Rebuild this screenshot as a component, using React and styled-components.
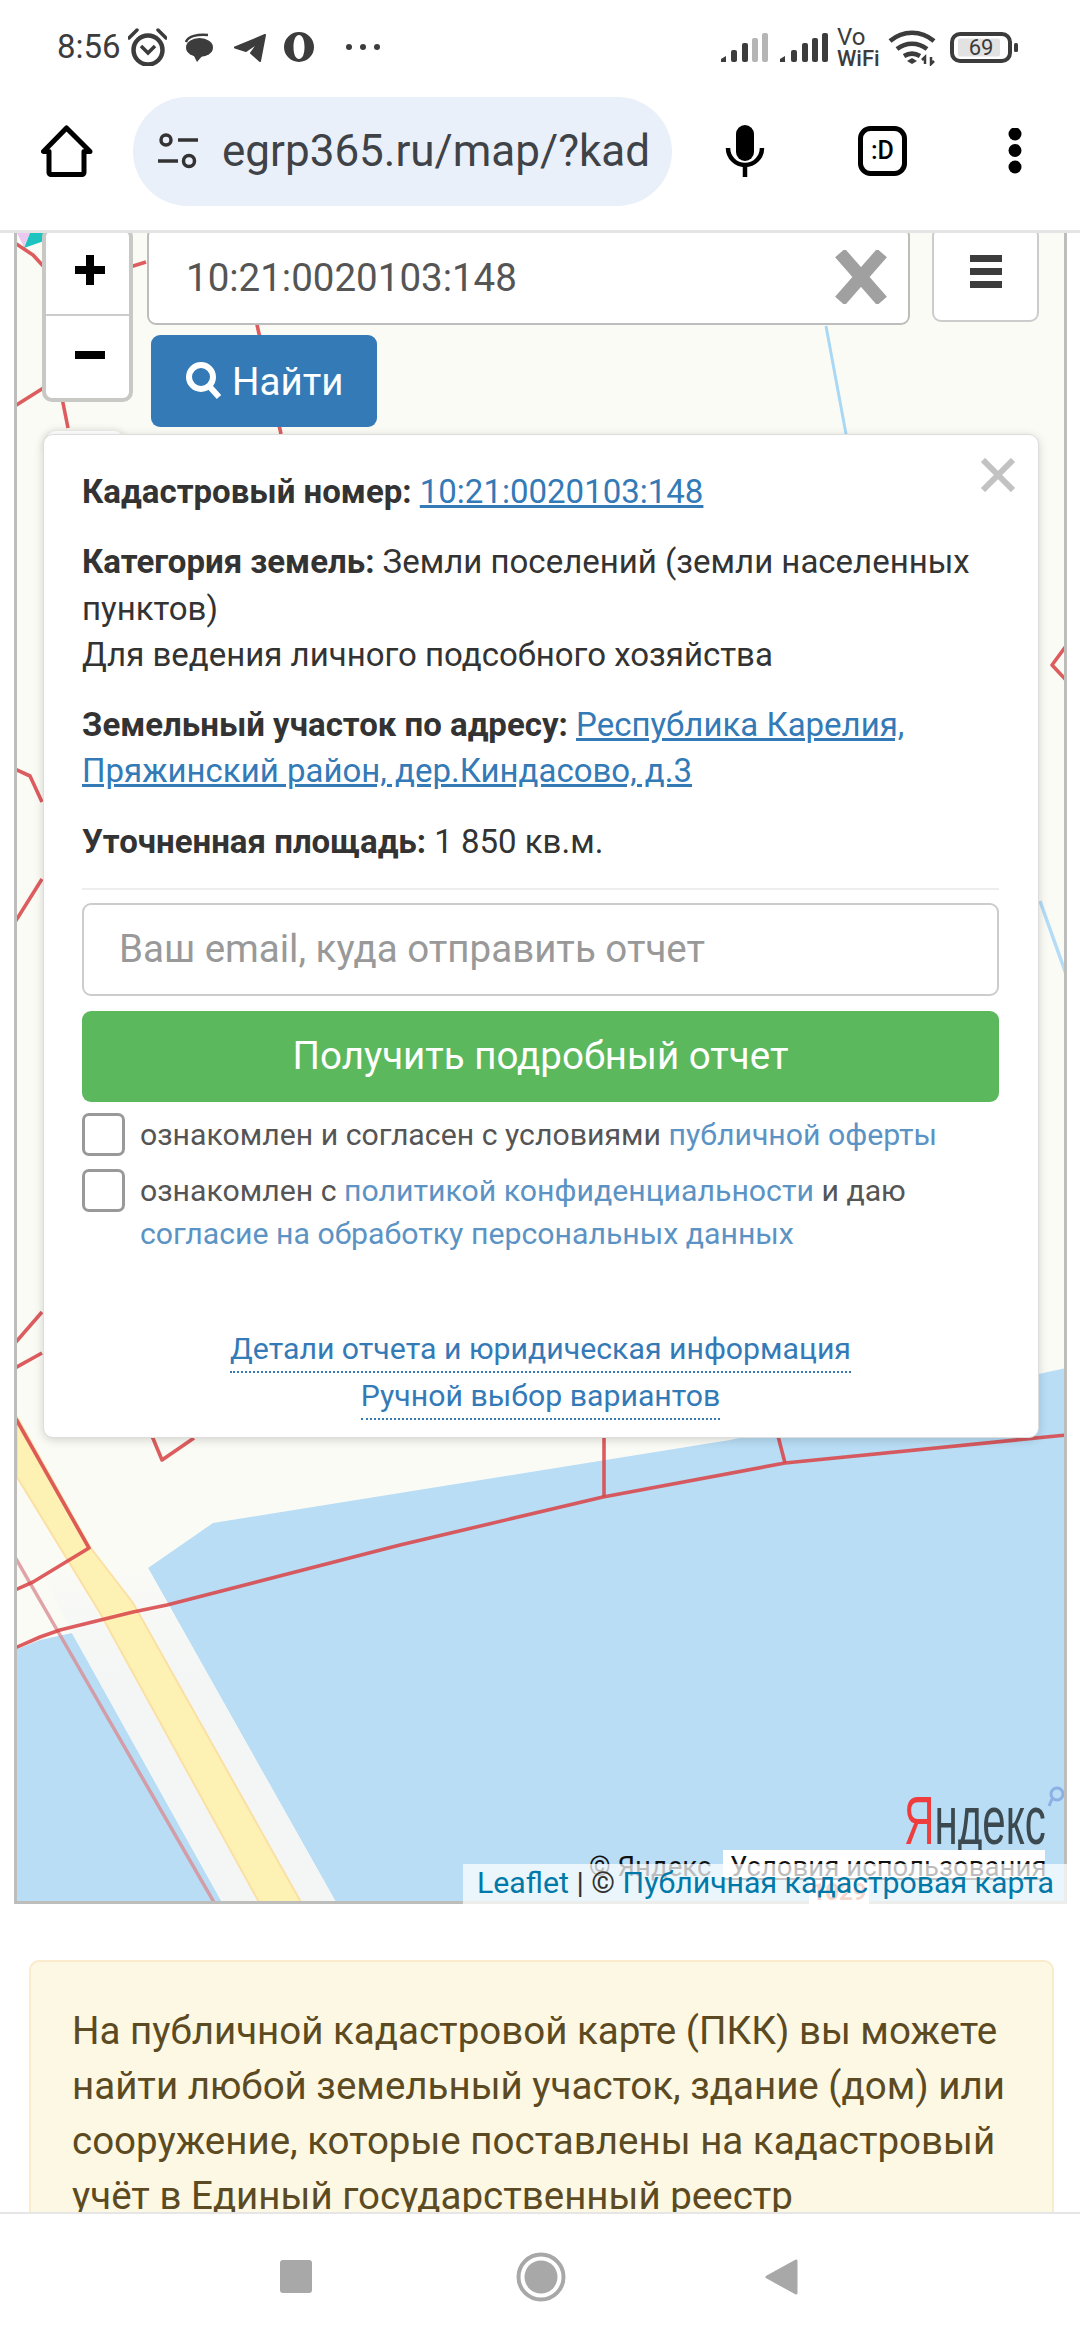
import React from 'react'
import styled, { createGlobalStyle } from 'styled-components'

const GlobalStyle = createGlobalStyle`
  html, body {
    margin: 0;
    padding: 0;
    background: #fff;
  }
  * {
    box-sizing: border-box;
  }
`

const Screen = styled.div`
  width: 1080px;
  height: 2340px;
  display: flex;
  flex-direction: column;
  overflow: hidden;
  background: #fff;
  font-family: Roboto, 'Liberation Sans', sans-serif;
  color: #333;
`

const StatusBar = styled.div`
  height: 94px;
  padding-left: 57px;
  display: flex;
  align-items: center;
  flex-shrink: 0;
`

const Time = styled.span`
  font-size: 33px;
  color: #3c3c3c;
  line-height: 38px;
  width: 62px;
`

const StatusIcon = styled.svg`
  display: block;
  height: 38px;
  flex-shrink: 0;
  margin-left: ${({ $ml }) => $ml || 0}px;
  color: #3c3c3c;
`

const BrowserBar = styled.div`
  height: 139px;
  padding: 4px 0 26px 41px;
  display: flex;
  align-items: center;
  flex-shrink: 0;
  border-bottom: 3px solid #e4e4e4;
`

const BarIcon = styled.svg`
  display: block;
  flex-shrink: 0;
  margin-left: ${({ $ml }) => $ml || 0}px;
`

const UrlPill = styled.div`
  width: 539px;
  height: 109px;
  margin-left: 40px;
  padding: 0 22px 0 24px;
  border-radius: 55px;
  background: #eaf0f9;
  display: flex;
  align-items: center;
  gap: 24px;
  overflow: hidden;
  flex-shrink: 0;
`

const UrlText = styled.span`
  font-size: 44px;
  color: #3f4347;
  white-space: nowrap;
`

const Content = styled.div`
  flex: 1;
  min-height: 0;
  overflow: hidden;
`

const MapBox = styled.div`
  position: relative;
  display: flow-root;
  width: 1053px;
  height: 1671px;
  margin-left: 14px;
  border: 3px solid #bdbdbb;
  border-top: none;
  background: #fbfbf6;
`

const MapArt = styled.svg`
  position: absolute;
  left: 0;
  top: 0;
  display: block;
  filter: blur(0.6px);
`

const MapOverlay = styled.div`
  position: relative;
  z-index: 0;
`

const Toolbar = styled.div`
  display: flex;
  align-items: flex-start;
  margin-top: -6px;
  padding-left: 25px;
  height: 200px;
`

const ZoomControl = styled.div`
  width: 91px;
  height: 175px;
  border: 4px solid #c8c8c4;
  border-radius: 10px;
  background: #fff;
  display: flex;
  flex-direction: column;
  overflow: hidden;
  flex-shrink: 0;
`

const ZoomButton = styled.div`
  flex: 1;
  display: flex;
  align-items: center;
  justify-content: center;
  padding: 0 0 4px 5px;
  border-bottom: ${({ $divided }) => ($divided ? '2px solid #ccc' : 'none')};
`

const SearchColumn = styled.div`
  width: 763px;
  margin-left: 14px;
  display: flex;
  flex-direction: column;
  gap: 10px;
  flex-shrink: 0;
`

const SearchInput = styled.div`
  height: 98px;
  padding: 2px 20px 0 37px;
  border: 2px solid #bdbdbd;
  border-radius: 9px;
  background: #fff;
  display: flex;
  align-items: center;
  justify-content: space-between;
  font-size: 38.5px;
  color: #555;
`

const FindButton = styled.div`
  width: 226px;
  height: 92px;
  margin-left: 4px;
  border-radius: 9px;
  background: #337ab7;
  color: #fff;
  font-size: 38.5px;
  display: flex;
  align-items: center;
  padding-left: 34px;
  gap: 9px;
`

const MenuButton = styled.div`
  width: 107px;
  height: 95px;
  margin-left: 22px;
  border: 2px solid #ccc;
  border-radius: 9px;
  background: #fff;
  display: flex;
  flex-direction: column;
  align-items: center;
  justify-content: flex-end;
  padding-bottom: 32px;
  gap: 6px;
`

const MenuBar = styled.span`
  width: 32px;
  height: 7px;
  background: #3c3c3c;
`

const Popup = styled.div`
  position: relative;
  width: 996px;
  height: 1004px;
  margin: 7px 0 0 26px;
  padding: 34px 39px 0 38px;
  border: 1px solid #ddd;
  border-radius: 10px;
  background: #fff;
  box-shadow: 0 2px 10px rgba(0, 0, 0, 0.16);
  font-size: 33px;
  line-height: 46.3px;
`

const HiddenTab = styled.div`
  position: absolute;
  left: 2px;
  top: -4px;
  width: 78px;
  height: 20px;
  border-radius: 10px 10px 0 0;
  background: #fff;
  box-shadow: 0 0 8px rgba(0, 0, 0, 0.15);
  z-index: -1;
`

const CloseIcon = styled.svg`
  position: absolute;
  right: 22px;
  top: 23px;
  display: block;
`

const InfoBlock = styled.p`
  margin: 0 0 24px;
`

const Label = styled.b`
  font-weight: 700;
`

const InfoLink = styled.a`
  color: #337ab7;
  text-decoration: underline;
`

const Divider = styled.hr`
  margin: -1px 0 13px;
  border: none;
  border-top: 2px solid #eee;
`

const EmailInput = styled.div`
  height: 93px;
  padding-left: 35px;
  border: 2px solid #ccc;
  border-radius: 9px;
  display: flex;
  align-items: center;
  font-size: 38.5px;
  color: #999;
`

const SubmitButton = styled.div`
  height: 91px;
  margin-top: 15px;
  border-radius: 9px;
  background: #5cb85c;
  color: #fff;
  font-size: 38.5px;
  display: flex;
  align-items: center;
  justify-content: center;
`

const CheckRow = styled.div`
  display: flex;
  align-items: flex-start;
  gap: 15px;
  margin-top: ${({ $mt }) => $mt}px;
  font-size: 30.25px;
  line-height: 43px;
  color: #555;
`

const CheckBox = styled.span`
  width: 43px;
  height: 43px;
  flex-shrink: 0;
  border: 3px solid #999;
  border-radius: 7px;
`

const CheckText = styled.div`
  padding-top: 0;
`

const TextLink = styled.a`
  color: #5b93c4;
`

const DetailLinks = styled.div`
  margin-top: 73px;
  display: flex;
  flex-direction: column;
  align-items: center;
  gap: 2px;
  font-size: 30.25px;
  line-height: 42px;
`

const DottedLink = styled.a`
  color: #337ab7;
  border-bottom: 2px dotted #337ab7;
  padding-bottom: 1px;
  line-height: 42px;
`

const YandexLogo = styled.div`
  position: absolute;
  right: 20px;
  bottom: 46px;
  width: 140px;
  height: 70px;
  filter: blur(0.7px);
`

const LogoText = styled.div`
  transform: scaleX(0.62);
  transform-origin: left top;
  white-space: nowrap;
  font-family: 'Liberation Sans', sans-serif;
  font-size: 68px;
  line-height: 70px;
  color: #3c4a50;
`

const LogoLetter = styled.span`
  color: #ef3c3c;
`

const MapScale = styled.div`
  position: absolute;
  right: 195px;
  bottom: -3px;
  height: 24px;
  width: 60px;
  background: #fff;
  color: #d86a50;
  font-size: 24px;
  line-height: 24px;
  font-weight: 700;
  text-align: center;
  overflow: hidden;
`

const YandexCopy = styled.div`
  position: absolute;
  left: 572px;
  bottom: 21px;
  height: 30px;
  display: flex;
  align-items: flex-start;
  font-size: 27.6px;
  line-height: 34px;
  color: #111;
  white-space: nowrap;
`

const CopyText = styled.span`
  width: 134px;
`

const TermsLink = styled.span`
  width: 322px;
  height: 30px;
  padding-left: 7px;
  background: #fff;
  border-bottom: 2px solid #333;
`

const Attribution = styled.div`
  position: absolute;
  right: -3px;
  bottom: -3px;
  width: 604px;
  height: 40px;
  padding-left: 14px;
  background: rgba(255, 255, 255, 0.72);
  font-size: 30.25px;
  line-height: 38px;
  color: #333;
  white-space: nowrap;
`

const AttributionLink = styled.a`
  color: #0078a8;
`

const Alert = styled.div`
  width: 1025px;
  margin: 56px 0 0 29px;
  padding: 41px 30px 30px 41px;
  border: 2px solid #faebcc;
  border-radius: 10px;
  background: #fcf8e3;
  color: #5c4a22;
  font-size: 38.5px;
  line-height: 55px;
`

const NavBar = styled.div`
  height: 128px;
  flex-shrink: 0;
  border-top: 2px solid #e6e6e6;
  padding-left: 280px;
  display: flex;
  align-items: center;
  background: #fff;
`

const NavIcon = styled.svg`
  display: block;
  margin-left: ${({ $ml }) => $ml || 0}px;
  flex-shrink: 0;
`

function MapDrawing() {
  const red = { fill: 'none', stroke: '#d8474a', strokeWidth: 3.6, strokeOpacity: 0.88, strokeLinejoin: 'round' }
  return (
    <MapArt width='1047' height='1668' viewBox='17 233 1047 1668'>
      <defs>
        <linearGradient id='shoulder' gradientUnits='userSpaceOnUse' x1='0' y1='1550' x2='0' y2='1680'>
          <stop offset='0' stopColor='#fbfbf6' />
          <stop offset='1' stopColor='#f3f6f5' />
        </linearGradient>
      </defs>
      <polygon points='148,1568 213,1523 730,1440 1066,1368 1066,1904 337,1904' fill='#b8ddf5' />
      <polygon points='15,1650 40,1640 72,1633 223,1904 15,1904' fill='#b8ddf5' />
      <polygon points='40,1570 130,1575 148,1568 337,1904 223,1904 72,1633' fill='url(#shoulder)' />
      <polygon
        points='17,1417 90,1547 133,1603 302,1904 260,1904 100,1613 17,1477'
        fill='#fdf2b4'
        stroke='#fbe0a4'
        strokeWidth='2'
      />
      <polygon points='17,233 30,233 24,247' fill='#ecc8f0' />
      <polygon points='30,233 47,233 44,241 24,248' fill='#1cc4c0' />
      <line x1='826' y1='326' x2='846' y2='434' stroke='#a9d8f5' strokeWidth='3' />
      <line x1='1040' y1='901' x2='1066' y2='974' stroke='#b4dcf6' strokeWidth='3.5' />
      <polyline points='15,1557 60,1635 215,1904' fill='none' stroke='#d98d94' strokeWidth='3.5' strokeOpacity='0.8' />
      <polyline {...red} points='15,243 33,255 45,268' />
      <polyline {...red} points='15,406 45,387' />
      <polyline {...red} points='62,398 68,428' />
      <polyline {...red} points='130,267 146,262' />
      <polyline {...red} points='256,320 281,434' />
      <polyline {...red} points='15,769 30,776 42,802' />
      <polyline {...red} points='15,922 42,879' />
      <polyline {...red} points='15,1343 42,1312' />
      <polyline {...red} points='15,1368 42,1353' />
      <polyline {...red} points='1066,646 1052,665 1066,680' />
      <polyline {...red} points='16,1419 89,1548 33,1582 15,1590' />
      <polyline {...red} points='152,1436 162,1460 194,1438' />
      <polyline
        {...red}
        points='15,1648 40,1637 60,1630 133,1612 167,1605 400,1545 603,1497 785,1463 1066,1435'
      />
      <polyline {...red} points='604,1436 604,1497' />
      <polyline {...red} points='778,1436 785,1463' />
      <g fill='none' stroke='#7fa6e0' strokeWidth='3' opacity='0.8'>
        <circle cx='1057' cy='1794' r='6' />
        <line x1='1052' y1='1799' x2='1049' y2='1806' />
      </g>
    </MapArt>
  )
}

export default function App() {
  return (
    <Screen>
      <GlobalStyle />
      <StatusBar>
        <Time>8:56</Time>
        <StatusIcon $ml={9} width='39' viewBox='128 28 39 38'>
          <circle cx='148' cy='50' r='14.5' fill='none' stroke='currentColor' strokeWidth='4.5' />
          <polyline points='141,46 148,53 155,46' fill='none' stroke='currentColor' strokeWidth='3.5' />
          <path d='M129 38l8-8M158 30l8 8' stroke='currentColor' strokeWidth='3.5' strokeLinecap='round' />
        </StatusIcon>
        <StatusIcon $ml={18} width='28' viewBox='185 28 28 38'>
          <path d='M186 42c2-6 12-8 22-7' fill='none' stroke='currentColor' strokeWidth='2.5' />
          <ellipse cx='199.500' cy='47.500' rx='13.500' ry='9.500' fill='currentColor' />
          <polygon points='193,54 203,55 197,62' fill='currentColor' />
        </StatusIcon>
        <StatusIcon $ml={20} width='33' viewBox='233 28 33 38'>
          <path
            d='M265 35L235 47.500l11 3.500L259 42l-8 11 9 8z'
            fill='currentColor'
            stroke='currentColor'
            strokeWidth='2'
            strokeLinejoin='round'
          />
        </StatusIcon>
        <StatusIcon $ml={18} width='30' viewBox='284 28 30 38'>
          <path
            fillRule='evenodd'
            d='M299 32a15 15 0 1 0 0 30 15 15 0 1 0 0-30zm0 3c3.500 0 5.500 5 5.500 12s-2 12-5.500 12-5.500-5-5.500-12 2-12 5.500-12z'
            fill='currentColor'
          />
        </StatusIcon>
        <StatusIcon $ml={32} width='34' viewBox='346 28 34 38'>
          <circle cx='349' cy='47' r='3' fill='currentColor' />
          <circle cx='363' cy='47' r='3' fill='currentColor' />
          <circle cx='377' cy='47' r='3' fill='currentColor' />
        </StatusIcon>
        <StatusIcon $ml={340} width='48' viewBox='719 28 48 38'>
          <path d='M720 59l5-3v6h-5z' fill='currentColor' />
          <rect x='730' y='50' width='6' height='12' rx='2' fill='currentColor' />
          <rect x='741' y='43' width='6' height='19' rx='2' fill='currentColor' />
          <rect x='751' y='38' width='6' height='24' rx='2' fill='#b5b5b5' />
          <rect x='761' y='33' width='6' height='29' rx='2' fill='#b5b5b5' />
        </StatusIcon>
        <StatusIcon $ml={11} width='49' viewBox='778 28 49 38'>
          <path d='M779 59l5-3v6h-5z' fill='currentColor' />
          <rect x='790' y='50' width='6' height='12' rx='2' fill='currentColor' />
          <rect x='801' y='43' width='6' height='19' rx='2' fill='currentColor' />
          <rect x='811' y='38' width='6' height='24' rx='2' fill='currentColor' />
          <rect x='821' y='33' width='6' height='29' rx='2' fill='currentColor' />
        </StatusIcon>
        <StatusIcon $ml={8} width='44' viewBox='835 28 44 38'>
          <text x='836' y='45' fontSize='24' fontFamily='Roboto' fill='currentColor'>Vo</text>
          <text x='836' y='66' fontSize='22' fontFamily='Roboto' fontWeight='500' fill='currentColor'>WiFi</text>
        </StatusIcon>
        <StatusIcon $ml={8} width='48' viewBox='887 28 48 38'>
          <g fill='none' stroke='currentColor' strokeWidth='4.500'>
            <path d='M889 41c13-11 31-11 44 0' />
            <path d='M896 49c9-7 21-7 30 0' />
            <path d='M903 56c5-3 11-3 16 0' />
          </g>
          <polygon points='911,58 916,61 911,64 906,61' fill='currentColor' />
          <path d='M924 64v-7l-3 3M930 57v7l3-3' fill='none' stroke='currentColor' strokeWidth='2.500' />
        </StatusIcon>
        <StatusIcon $ml={14} width='70' viewBox='949 28 70 38'>
          <rect x='951' y='34' width='58' height='27' rx='8' fill='none' stroke='currentColor' strokeWidth='4' />
          <rect x='957' y='38.500' width='42' height='18' rx='2' fill='#e2e2e2' />
          <text x='980' y='55' textAnchor='middle' fontSize='22' fontFamily='Roboto' fill='currentColor'>69</text>
          <rect x='1013' y='43' width='4' height='9' rx='1.500' fill='currentColor' />
        </StatusIcon>
      </StatusBar>

      <BrowserBar>
        <BarIcon width='52' height='52' viewBox='41 127 52 52'>
          <path
            d='M66.500 130L43.500 153.500h5.500v21a2 2 0 0 0 2 2h31a2 2 0 0 0 2-2v-21h6z'
            fill='none'
            stroke='#000'
            strokeWidth='5'
            strokeLinejoin='round'
          />
        </BarIcon>
        <UrlPill>
          <BarIcon width='41' height='36' viewBox='155 136 41 36'>
            <g fill='none' stroke='#333' strokeWidth='3.500'>
              <circle cx='164' cy='143' r='5' />
              <line x1='176' y1='143' x2='196' y2='143' />
              <line x1='156' y1='164' x2='176' y2='164' />
              <circle cx='187' cy='164' r='5.500' />
            </g>
          </BarIcon>
          <UrlText>egrp365.ru/map/?kad</UrlText>
        </UrlPill>
        <BarIcon $ml={52} width='42' height='54' viewBox='723 125 42 54'>
          <rect x='735' y='126' width='18' height='36' rx='9' fill='#000' />
          <path d='M727 149a17 17 0 0 0 34 0' fill='none' stroke='#000' strokeWidth='4.500' />
          <line x1='744' y1='166' x2='744' y2='178' stroke='#000' strokeWidth='4.500' />
        </BarIcon>
        <BarIcon $ml={92} width='50' height='50' viewBox='857 128 50 50'>
          <rect x='859.500' y='130.500' width='44' height='45' rx='10' fill='none' stroke='#000' strokeWidth='5' />
          <text x='881.500' y='161' textAnchor='middle' fontSize='25' fontWeight='500' fontFamily='Roboto' fill='#000'>:D</text>
        </BarIcon>
        <BarIcon $ml={100} width='14' height='46' viewBox='1007 130 14 46'>
          <circle cx='1014' cy='136' r='6.500' fill='#000' />
          <circle cx='1014' cy='152.500' r='6.500' fill='#000' />
          <circle cx='1014' cy='169' r='6.500' fill='#000' />
        </BarIcon>
      </BrowserBar>

      <Content>
        <MapBox>
          <MapDrawing />
          <MapOverlay>
            <Toolbar>
              <ZoomControl>
                <ZoomButton $divided>
                  <svg width='32' height='32' viewBox='0 0 32 32'>
                    <path d='M1 16h30M16 1v30' stroke='#000' strokeWidth='8' />
                  </svg>
                </ZoomButton>
                <ZoomButton>
                  <svg width='32' height='32' viewBox='0 0 32 32'>
                    <path d='M1 16h30' stroke='#000' strokeWidth='8' />
                  </svg>
                </ZoomButton>
              </ZoomControl>
              <SearchColumn>
                <SearchInput>
                  <span>10:21:0020103:148</span>
                  <svg width='54' height='54' viewBox='0 0 54 54'>
                    <path d='M6 3l42 48M48 3L6 51' stroke='#a0a0a0' strokeWidth='13' />
                  </svg>
                </SearchInput>
                <FindButton>
                  <svg width='38' height='38' viewBox='0 0 38 38'>
                    <circle cx='16' cy='15' r='12' fill='none' stroke='#fff' strokeWidth='6' />
                    <line x1='24' y1='24' x2='34' y2='35' stroke='#fff' strokeWidth='6' />
                  </svg>
                  Найти
                </FindButton>
              </SearchColumn>
              <MenuButton>
                <MenuBar />
                <MenuBar />
                <MenuBar />
              </MenuButton>
            </Toolbar>
            <Popup>
              <HiddenTab />
              <CloseIcon width='36' height='34' viewBox='0 0 36 34'>
                <path d='M3 2l30 30M33 2L3 32' stroke='#c2c2c2' strokeWidth='6' />
              </CloseIcon>
              <InfoBlock>
                <Label>Кадастровый номер:</Label> <InfoLink>10:21:0020103:148</InfoLink>
              </InfoBlock>
              <InfoBlock>
                <Label>Категория земель:</Label> Земли поселений (земли населенных пунктов)
                <br />
                Для ведения личного подсобного хозяйства
              </InfoBlock>
              <InfoBlock>
                <Label>Земельный участок по адресу:</Label>{' '}
                <InfoLink>Республика Карелия, Пряжинский район, дер.Киндасово, д.3</InfoLink>
              </InfoBlock>
              <InfoBlock>
                <Label>Уточненная площадь:</Label> 1 850 кв.м.
              </InfoBlock>
              <Divider />
              <EmailInput>Ваш email, куда отправить отчет</EmailInput>
              <SubmitButton>Получить подробный отчет</SubmitButton>
              <CheckRow $mt={11}>
                <CheckBox />
                <CheckText>
                  ознакомлен и согласен с условиями <TextLink>публичной оферты</TextLink>
                </CheckText>
              </CheckRow>
              <CheckRow $mt={13}>
                <CheckBox />
                <CheckText>
                  ознакомлен с <TextLink>политикой конфиденциальности</TextLink> и даю{' '}
                  <TextLink>согласие на обработку персональных данных</TextLink>
                </CheckText>
              </CheckRow>
              <DetailLinks>
                <DottedLink>Детали отчета и юридическая информация</DottedLink>
                <DottedLink>Ручной выбор вариантов</DottedLink>
              </DetailLinks>
            </Popup>
          </MapOverlay>
          <YandexLogo>
            <LogoText>
              <LogoLetter>Я</LogoLetter>ндекс
            </LogoText>
          </YandexLogo>
          <MapScale>1029</MapScale>
          <YandexCopy>
            <CopyText>© Яндекс</CopyText>
            <TermsLink>Условия использования</TermsLink>
          </YandexCopy>
          <Attribution>
            <AttributionLink>Leaflet</AttributionLink> | © <AttributionLink>Публичная кадастровая карта</AttributionLink>
          </Attribution>
        </MapBox>
        <Alert>
          На публичной кадастровой карте (ПКК) вы можете найти любой земельный участок, здание (дом) или сооружение,
          которые поставлены на кадастровый учёт в Единый государственный реестр недвижимости.
        </Alert>
      </Content>

      <NavBar>
        <NavIcon width='32' height='34' viewBox='0 0 32 34'>
          <rect width='32' height='33' rx='3' fill='#a8a8a8' />
        </NavIcon>
        <NavIcon $ml={204} width='50' height='50' viewBox='0 0 50 50'>
          <circle cx='25' cy='25' r='22.500' fill='none' stroke='#a8a8a8' strokeWidth='4' />
          <circle cx='25' cy='25' r='16.500' fill='#a8a8a8' />
        </NavIcon>
        <NavIcon $ml={198} width='34' height='38' viewBox='0 0 34 38'>
          <path d='M32 3v32L3 19z' fill='#a8a8a8' stroke='#a8a8a8' strokeWidth='3' strokeLinejoin='round' />
        </NavIcon>
      </NavBar>
    </Screen>
  )
}
